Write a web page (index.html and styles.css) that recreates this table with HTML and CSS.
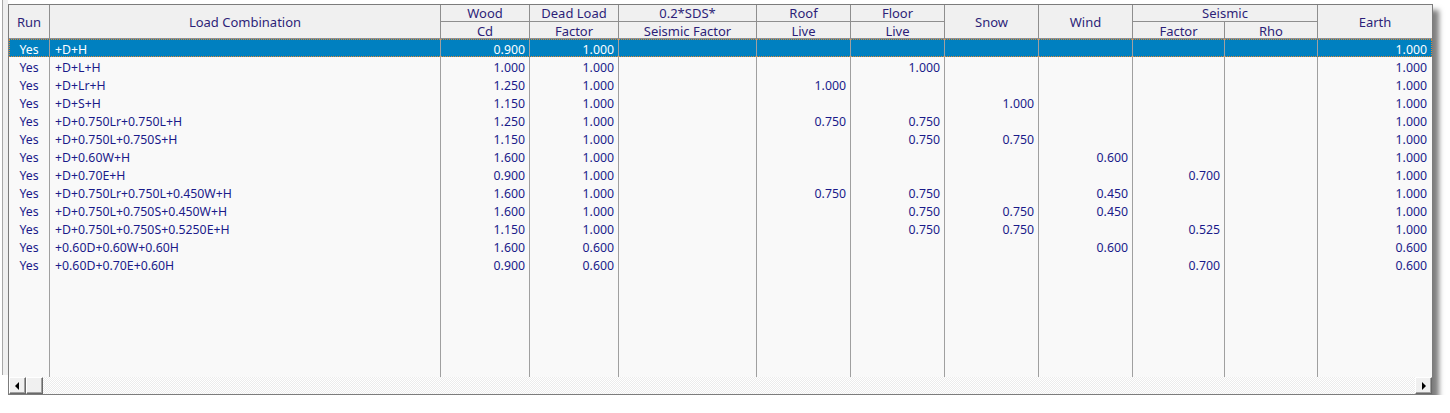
FILE: index.html
```html
<!DOCTYPE html>
<html>
<head>
<meta charset="utf-8">
<link rel="stylesheet" href="styles.css">
</head>
<body>
<div class="edge"></div>
<div class="frame">
  <div class="head">
    <div class="hc span2 c1">Run</div>
    <div class="hc span2 c2">Load Combination</div>
    <div class="hc c3 r1">Wood</div>
    <div class="hc c3 r2">Cd</div>
    <div class="hc c4 r1">Dead Load</div>
    <div class="hc c4 r2">Factor</div>
    <div class="hc c5 r1">0.2*SDS*</div>
    <div class="hc c5 r2">Seismic Factor</div>
    <div class="hc c6 r1">Roof</div>
    <div class="hc c6 r2">Live</div>
    <div class="hc c7 r1">Floor</div>
    <div class="hc c7 r2">Live</div>
    <div class="hc span2 c8">Snow</div>
    <div class="hc span2 c9">Wind</div>
    <div class="hc c10 r1 wide2">Seismic</div>
    <div class="hc c10 r2">Factor</div>
    <div class="hc c11 r2">Rho</div>
    <div class="hc span2 c12 last">Earth</div>
  </div>
  <div class="rows">
    <div class="row sel"><div class="cell run">Yes</div><div class="cell combo">+D+H</div><div class="cell num">0.900</div><div class="cell num">1.000</div><div class="cell num"></div><div class="cell num"></div><div class="cell num"></div><div class="cell num"></div><div class="cell num"></div><div class="cell num"></div><div class="cell num"></div><div class="cell num last">1.000</div></div>
    <div class="row"><div class="cell run">Yes</div><div class="cell combo">+D+L+H</div><div class="cell num">1.000</div><div class="cell num">1.000</div><div class="cell num"></div><div class="cell num"></div><div class="cell num">1.000</div><div class="cell num"></div><div class="cell num"></div><div class="cell num"></div><div class="cell num"></div><div class="cell num last">1.000</div></div>
    <div class="row"><div class="cell run">Yes</div><div class="cell combo">+D+Lr+H</div><div class="cell num">1.250</div><div class="cell num">1.000</div><div class="cell num"></div><div class="cell num">1.000</div><div class="cell num"></div><div class="cell num"></div><div class="cell num"></div><div class="cell num"></div><div class="cell num"></div><div class="cell num last">1.000</div></div>
    <div class="row"><div class="cell run">Yes</div><div class="cell combo">+D+S+H</div><div class="cell num">1.150</div><div class="cell num">1.000</div><div class="cell num"></div><div class="cell num"></div><div class="cell num"></div><div class="cell num">1.000</div><div class="cell num"></div><div class="cell num"></div><div class="cell num"></div><div class="cell num last">1.000</div></div>
    <div class="row"><div class="cell run">Yes</div><div class="cell combo">+D+0.750Lr+0.750L+H</div><div class="cell num">1.250</div><div class="cell num">1.000</div><div class="cell num"></div><div class="cell num">0.750</div><div class="cell num">0.750</div><div class="cell num"></div><div class="cell num"></div><div class="cell num"></div><div class="cell num"></div><div class="cell num last">1.000</div></div>
    <div class="row"><div class="cell run">Yes</div><div class="cell combo">+D+0.750L+0.750S+H</div><div class="cell num">1.150</div><div class="cell num">1.000</div><div class="cell num"></div><div class="cell num"></div><div class="cell num">0.750</div><div class="cell num">0.750</div><div class="cell num"></div><div class="cell num"></div><div class="cell num"></div><div class="cell num last">1.000</div></div>
    <div class="row"><div class="cell run">Yes</div><div class="cell combo">+D+0.60W+H</div><div class="cell num">1.600</div><div class="cell num">1.000</div><div class="cell num"></div><div class="cell num"></div><div class="cell num"></div><div class="cell num"></div><div class="cell num">0.600</div><div class="cell num"></div><div class="cell num"></div><div class="cell num last">1.000</div></div>
    <div class="row"><div class="cell run">Yes</div><div class="cell combo">+D+0.70E+H</div><div class="cell num">0.900</div><div class="cell num">1.000</div><div class="cell num"></div><div class="cell num"></div><div class="cell num"></div><div class="cell num"></div><div class="cell num"></div><div class="cell num">0.700</div><div class="cell num"></div><div class="cell num last">1.000</div></div>
    <div class="row"><div class="cell run">Yes</div><div class="cell combo">+D+0.750Lr+0.750L+0.450W+H</div><div class="cell num">1.600</div><div class="cell num">1.000</div><div class="cell num"></div><div class="cell num">0.750</div><div class="cell num">0.750</div><div class="cell num"></div><div class="cell num">0.450</div><div class="cell num"></div><div class="cell num"></div><div class="cell num last">1.000</div></div>
    <div class="row"><div class="cell run">Yes</div><div class="cell combo">+D+0.750L+0.750S+0.450W+H</div><div class="cell num">1.600</div><div class="cell num">1.000</div><div class="cell num"></div><div class="cell num"></div><div class="cell num">0.750</div><div class="cell num">0.750</div><div class="cell num">0.450</div><div class="cell num"></div><div class="cell num"></div><div class="cell num last">1.000</div></div>
    <div class="row"><div class="cell run">Yes</div><div class="cell combo">+D+0.750L+0.750S+0.5250E+H</div><div class="cell num">1.150</div><div class="cell num">1.000</div><div class="cell num"></div><div class="cell num"></div><div class="cell num">0.750</div><div class="cell num">0.750</div><div class="cell num"></div><div class="cell num">0.525</div><div class="cell num"></div><div class="cell num last">1.000</div></div>
    <div class="row"><div class="cell run">Yes</div><div class="cell combo">+0.60D+0.60W+0.60H</div><div class="cell num">1.600</div><div class="cell num">0.600</div><div class="cell num"></div><div class="cell num"></div><div class="cell num"></div><div class="cell num"></div><div class="cell num">0.600</div><div class="cell num"></div><div class="cell num"></div><div class="cell num last">0.600</div></div>
    <div class="row"><div class="cell run">Yes</div><div class="cell combo">+0.60D+0.70E+0.60H</div><div class="cell num">0.900</div><div class="cell num">0.600</div><div class="cell num"></div><div class="cell num"></div><div class="cell num"></div><div class="cell num"></div><div class="cell num"></div><div class="cell num">0.700</div><div class="cell num"></div><div class="cell num last">0.600</div></div>
    <div class="row filler"><div class="cell"></div><div class="cell"></div><div class="cell"></div><div class="cell"></div><div class="cell"></div><div class="cell"></div><div class="cell"></div><div class="cell"></div><div class="cell"></div><div class="cell"></div><div class="cell"></div><div class="cell last"></div></div>
  </div>
  <div class="hscroll">
    <div class="sbtn"><span class="arrow left"></span></div>
    <div class="sbtn thumb"></div>
    <div class="track"></div>
    <div class="sbtn"><span class="arrow right"></span></div>
  </div>
</div>
</body>
</html>
```
FILE: styles.css
```css
html, body {
  margin: 0;
  padding: 0;
  background: #ffffff;
}
body {
  display: flex;
  align-items: flex-start;
  font-family: "Noto Sans", "Open Sans", sans-serif;
  font-size: 12.3px;
}
.edge {
  flex: none;
  margin-left: 2px;
  width: 5px;
  height: 375px;
  border-left: 1px solid #a8a8a8;
  background: #f0f0f0;
}
.frame {
  flex: none;
  margin-top: 4px;
  width: 1423px;
  height: 389px;
  border: 1px solid #7c7c7c;
  background: #f9f9f9;
  display: flex;
  flex-direction: column;
  box-shadow: 6px 6px 5px rgba(0, 0, 0, 0.5);
}
.head {
  display: grid;
  grid-template-columns: 41px 391px 89px 89px 138px 94px 94px 94px 94px 92px 93px 114px;
  grid-template-rows: 17px 17px;
  background: #f0f0f0;
  color: #2d1f78;
  font-size: 13px;
}
.hc {
  box-sizing: border-box;
  border-right: 1px solid #8e8e8e;
  border-bottom: 1px solid #8e8e8e;
  display: flex;
  align-items: center;
  justify-content: center;
  line-height: 16px;
  white-space: nowrap;
}
.hc.span2 { grid-row: 1 / span 2; padding-top: 1px; }
.r1 { grid-row: 1; padding-bottom: 1px; }
.r2 { grid-row: 2; padding-top: 1px; }
.c1 { grid-column: 1; }
.c2 { grid-column: 2; }
.c3 { grid-column: 3; }
.c4 { grid-column: 4; }
.c5 { grid-column: 5; }
.c6 { grid-column: 6; }
.c7 { grid-column: 7; }
.c8 { grid-column: 8; }
.c9 { grid-column: 9; }
.c10 { grid-column: 10; }
.c11 { grid-column: 11; }
.c12 { grid-column: 12; }
.hc.wide2 { grid-column: 10 / span 2; }
.hc.last, .cell.last { border-right: none; }

.rows {
  flex: 1;
  display: flex;
  flex-direction: column;
  color: #1a1a8a;
}
.row {
  display: grid;
  grid-template-columns: 41px 391px 89px 89px 138px 94px 94px 94px 94px 92px 93px 114px;
  height: 18px;
}
.row.filler { flex: 1; height: auto; }
.row.sel {
  background: #0080c0;
  color: #ffffff;
  outline: 1px dotted #e0862e;
  outline-offset: -1px;
}
.cell {
  box-sizing: border-box;
  border-right: 1px solid #a0a0a0;
  line-height: 18px;
  padding-top: 2px;
  white-space: nowrap;
  overflow: hidden;
}
.cell.run { text-align: center; }
.cell.combo { padding-left: 5px; }
.cell.num { text-align: right; padding-right: 4px; }
.cell.num.last { padding-right: 5px; }

.hscroll {
  flex: none;
  height: 17px;
  display: flex;
}
.sbtn {
  flex: none;
  box-sizing: border-box;
  width: 17px;
  height: 17px;
  background: #f0f0f0;
  border-top: 1px solid #ffffff;
  border-left: 1px solid #ffffff;
  border-right: 1px solid #696969;
  border-bottom: 1px solid #696969;
  box-shadow: inset -1px -1px 0 #a0a0a0;
  display: flex;
  align-items: center;
  justify-content: center;
}
.track {
  flex: 1;
  background-color: #ffffff;
  background-image: repeating-conic-gradient(#ececec 0 25%, #ffffff 0 50%);
  background-size: 2px 2px;
}
.arrow {
  width: 0;
  height: 0;
  border-top: 4px solid transparent;
  border-bottom: 4px solid transparent;
}
.arrow.left { border-right: 4px solid #000000; margin-right: 1px; }
.arrow.right { border-left: 4px solid #000000; margin-left: 1px; }
```
